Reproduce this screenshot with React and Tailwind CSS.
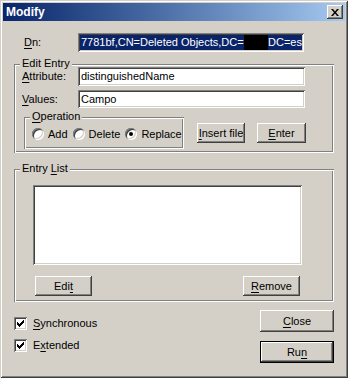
import React from "react"

const raised = "shadow-[inset_-1px_-1px_0_#404040,inset_1px_1px_0_#fff,inset_-2px_-2px_0_#808080,inset_2px_2px_0_#d4d0c8]"
const sunken = "shadow-[inset_1px_1px_0_#808080,inset_-1px_-1px_0_#fff,inset_2px_2px_0_#404040,inset_-2px_-2px_0_#d4d0c8]"
const etched = "shadow-[inset_1px_1px_0_#808080,inset_-1px_-1px_0_#fff,inset_2px_2px_0_#fff,inset_-2px_-2px_0_#808080]"

function U({ children }) {
  return <span className="underline underline-offset-2">{children}</span>
}

function Button({ className = "", children, isDefault }) {
  return (
    <div
      className={
        "flex items-center justify-center " +
        (isDefault
          ? "shadow-[inset_0_0_0_1px_#000,inset_-2px_-2px_0_#404040,inset_2px_2px_0_#fff,inset_-3px_-3px_0_#808080] "
          : raised + " ") +
        className
      }
    >
      {children}
    </div>
  )
}

function Radio({ checked, label }) {
  return (
    <div className="flex items-center">
      <div className={"w-[12px] h-[12px] rounded-full bg-white flex items-center justify-center " + sunken}>
        {checked && <div className="w-[4px] h-[4px] rounded-full bg-black" />}
      </div>
      <span className="ml-[4px]">{label}</span>
    </div>
  )
}

function Check({ children }) {
  return (
    <div className="flex items-center">
      <div className={"w-[13px] h-[13px] bg-white flex items-center justify-center " + sunken}>
        <svg width="7" height="7" viewBox="0 0 7 7">
          <path d="M0 2h1v1h1v1h1v-1h1v-1h1v-1h1v-1h1v3h-1v1h-1v1h-1v1h-1v1h-1v-1h-1v-1h-1z" fill="#000" />
        </svg>
      </div>
      <span className="ml-[6px]">{children}</span>
    </div>
  )
}

function Group({ title, className = "", children }) {
  return (
    <div className={"relative " + etched + " " + className}>
      <span className="absolute -top-[7px] left-[6px] px-[2px] bg-[#d4d0c8] leading-[13px]">{title}</span>
      {children}
    </div>
  )
}

export default function App() {
  return (
    <div className="w-[348px] h-[378px] bg-[#d4d0c8] p-[3px] flex flex-col text-[11px] leading-[13px] text-black font-['Liberation_Sans',Arial,sans-serif] shadow-[inset_1px_1px_0_#d4d0c8,inset_-1px_-1px_0_#404040,inset_2px_2px_0_#fff,inset_-2px_-2px_0_#808080]">
      <div className="h-[18px] flex items-center justify-between pl-[3px] pr-[2px] bg-linear-to-r from-[#0a246a] to-[#a6caf0]">
        <span className="text-white font-bold text-[12px]">Modify</span>
        <Button className="w-[16px] h-[14px] bg-[#d4d0c8]">
          <svg width="8" height="7" viewBox="0 0 8 7">
            <path d="M0 0h2l2 2.5L6 0h2L5 3.5 8 7H6L4 4.5 2 7H0l3-3.5z" fill="#000" />
          </svg>
        </Button>
      </div>

      <div className="flex items-center mt-[12px] pl-[21px]">
        <span className="w-[54px]">
          <U>D</U>n:
        </span>
        <div className={"w-[226px] h-[19px] bg-white p-[2px] overflow-hidden " + sunken}>
          <div className="h-full bg-[#0a246a] text-white flex items-center pl-[1px] whitespace-nowrap">
            <span>7781bf,CN=Deleted Objects,DC=</span>
            <span className="inline-block w-[31px] h-full bg-black" />
            <span>DC=es</span>
          </div>
        </div>
      </div>

      <Group title="Edit Entry" className="mt-[12px] ml-[11px] w-[320px] h-[89px] pt-[3px] pl-[8px]">
        <div className="flex items-center">
          <span className="w-[56px]">
            <U>A</U>ttribute:
          </span>
          <div className={"w-[227px] h-[19px] bg-white flex items-center pl-[3px] " + sunken}>distinguishedName</div>
        </div>
        <div className="flex items-center mt-[4px]">
          <span className="w-[56px]">
            <U>V</U>alues:
          </span>
          <div className={"w-[227px] h-[18px] bg-white flex items-center pl-[3px] " + sunken}>Campo</div>
        </div>
        <div className="flex mt-[9px] ml-[2px]">
          <Group title={<><U>O</U>peration</>} className="w-[160px] h-[32px] flex items-center gap-[5px] pl-[8px] pt-[2px]">
            <Radio label="Add" />
            <Radio label="Delete" />
            <Radio label="Replace" checked />
          </Group>
          <Button className="ml-[13px] mt-[6px] w-[48px] h-[20px]">
            <span>
              <U>I</U>nsert file
            </span>
          </Button>
          <Button className="ml-[12px] mt-[6px] w-[49px] h-[20px]">
            <span>
              <U>E</U>nter
            </span>
          </Button>
        </div>
      </Group>

      <Group
        title={
          <>
            Entry <U>L</U>ist
          </>
        }
        className="mt-[16px] ml-[11px] w-[320px] h-[133px] pt-[16px] pl-[19px]"
      >
        <div className={"w-[269px] h-[80px] bg-white " + sunken} />
        <div className="flex mt-[11px] pl-[2px]">
          <Button className="w-[57px] h-[20px]">
            <span>
              Edi<U>t</U>
            </span>
          </Button>
          <Button className="ml-[151px] w-[57px] h-[20px]">
            <span>
              <U>R</U>emove
            </span>
          </Button>
        </div>
      </Group>

      <div className="flex mt-[8px]">
        <div className="flex flex-col pl-[11px] pt-[7px] gap-[9px]">
          <Check>
            <U>S</U>ynchronous
          </Check>
          <Check>
            E<U>x</U>tended
          </Check>
        </div>
        <div className="ml-auto mr-[11px] flex flex-col gap-[9px]">
          <Button className="w-[74px] h-[22px]">
            <span>
              <U>C</U>lose
            </span>
          </Button>
          <Button className="w-[74px] h-[22px]" isDefault>
            <span>
              Ru<U>n</U>
            </span>
          </Button>
        </div>
      </div>
    </div>
  )
}
